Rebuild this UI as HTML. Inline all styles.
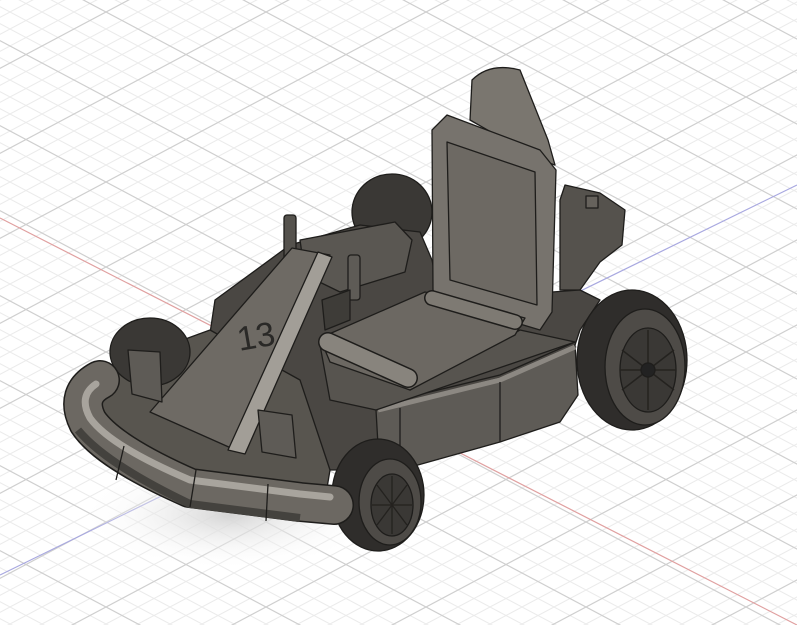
<!DOCTYPE html>
<html><head><meta charset="utf-8"><style>
html,body{margin:0;padding:0;background:#fff;}
svg{display:block}
</style></head><body>
<svg width="797" height="625" viewBox="0 0 797 625" xmlns="http://www.w3.org/2000/svg">
<defs>
<pattern id="mn" x="106" y="12" width="32" height="17" patternUnits="userSpaceOnUse">
<path d="M0 0L32 17M0 17L32 0" stroke="#ebebeb" stroke-width="1" fill="none"/>
</pattern>
<pattern id="mj" x="106" y="12" width="160" height="85" patternUnits="userSpaceOnUse">
<path d="M0 0L160 85M0 85L160 0" stroke="#cfcfcf" stroke-width="1.2" fill="none"/>
</pattern>
<radialGradient id="sh" cx="0.5" cy="0.5" r="0.5">
<stop offset="0" stop-color="#d4d4d4"/><stop offset="1" stop-color="#fff" stop-opacity="0"/>
</radialGradient>
</defs>
<rect width="797" height="625" fill="#fff"/>
<rect width="797" height="625" fill="url(#mn)"/>
<rect width="797" height="625" fill="url(#mj)"/>
<line x1="0" y1="218" x2="797" y2="625" stroke="#e0a0a0" stroke-width="1.2"/>
<line x1="797" y1="185" x2="0" y2="575" stroke="#a8a8e0" stroke-width="1.2"/>
<ellipse cx="230" cy="515" rx="150" ry="55" fill="url(#sh)"/>

<g stroke="#1e1d1b" stroke-width="1.3" stroke-linejoin="round">
<ellipse cx="392" cy="212" rx="40" ry="38" fill="#3a3835"/>
<path d="M565 185L600 193L625 210L622 245L600 262L580 290L560 290L560 200Z" fill="#55524d"/>
<rect x="586" y="196" width="12" height="12" fill="#66625c"/>
<path d="M215 300L290 245L360 225L420 232L432 260L440 300L580 290L600 300L580 330L575 345L560 420L400 470L330 470L300 430L240 430L200 400Z" fill="#4a4743"/>
<path d="M95 372L210 330L300 380L330 470L325 500L190 480L100 440Z" fill="#58554f"/>
<ellipse cx="632" cy="360" rx="55" ry="70" fill="#2f2d2b"/>
<ellipse cx="645" cy="367" rx="40" ry="58" fill="#4e4b47"/>
<ellipse cx="648" cy="370" rx="28" ry="42" fill="#3a3835"/>
<g stroke="#24221f" stroke-width="1.5">
<line x1="648" y1="330" x2="648" y2="410"/><line x1="622" y1="350" x2="674" y2="390"/><line x1="622" y1="390" x2="674" y2="350"/><line x1="620" y1="370" x2="676" y2="370"/>
</g>
<circle cx="648" cy="370" r="7" fill="#222"/>
<path d="M376 410L500 378L575 345L578 395L560 422L500 442L400 470L378 445Z" fill="#5e5b56"/>
<path d="M378 410L500 380L575 347" fill="none" stroke="#8c8882" stroke-width="5"/>
<path d="M376 405L500 375L575 342" fill="none"/>
<line x1="500" y1="382" x2="500" y2="442"/>
<line x1="400" y1="408" x2="400" y2="470"/>
<path d="M320 345L410 390L520 330L575 342L376 410L330 400Z" fill="#57544f"/>
<path d="M470 120L472 80Q490 62 520 70L548 140L555 165L540 160Z" fill="#7a766f"/>
<path d="M432 130L447 115L540 150L556 170L552 312L540 330L440 300L433 290Z" fill="#77736d"/>
<path d="M447 142L535 172L537 305L450 280Z" fill="#6d6963"/>
<path d="M320 338L425 292L525 318L515 335L410 390L330 362Z" fill="#6c6862"/>
<path d="M328 342L408 378" stroke-width="20" stroke="#1e1d1b" stroke-linecap="round"/>
<path d="M328 342L408 378" stroke-width="17" stroke="#88847d" stroke-linecap="round"/>
<path d="M432 298L515 322" stroke-width="16" stroke="#1e1d1b" stroke-linecap="round"/>
<path d="M432 298L515 322" stroke-width="13" stroke="#7e7a73" stroke-linecap="round"/>
<path d="M300 240L395 222L412 240L405 272L340 292L305 275Z" fill="#5a5752"/>
<rect x="284" y="215" width="12" height="45" rx="3" fill="#55524d"/>
<rect x="348" y="255" width="12" height="45" rx="3" fill="#5e5b56"/>
<path d="M322 300L350 290L350 320L325 330Z" fill="#3e3c38"/>
<ellipse cx="150" cy="352" rx="40" ry="34" fill="#3a3835"/>
<path d="M292 248L330 255L240 452L150 412Z" fill="#6e6a64"/>
<path d="M318 252L332 257L245 454L228 450Z" fill="#a29e97"/>
<text x="236" y="348" font-family="Liberation Sans,sans-serif" font-size="34" fill="#2a2927" stroke="none" transform="rotate(-10 255 330)">13</text>
<ellipse cx="378" cy="495" rx="46" ry="56" fill="#2f2d2b"/>
<ellipse cx="390" cy="502" rx="31" ry="43" fill="#4e4b47"/>
<ellipse cx="392" cy="505" rx="21" ry="31" fill="#3a3835"/>
<g stroke="#24221f" stroke-width="1.3">
<line x1="392" y1="476" x2="392" y2="534"/><line x1="372" y1="505" x2="412" y2="505"/><line x1="377" y1="485" x2="407" y2="525"/><line x1="377" y1="525" x2="407" y2="485"/>
</g>
<path d="M128 350L160 352L162 402L132 394Z" fill="#5e5b56"/>
<path d="M258 410L292 415L296 458L262 452Z" fill="#5e5b56"/>
<!-- bumper -->
<path d="M100 380Q74 394 88 422Q108 452 190 488L300 502Q322 504 334 505" fill="none" stroke="#1e1d1b" stroke-width="40" stroke-linecap="round"/>
<path d="M100 380Q74 394 88 422Q108 452 190 488L300 502Q322 504 334 505" fill="none" stroke="#6c6862" stroke-width="37" stroke-linecap="round"/>
<path d="M96 384Q78 396 90 418Q110 446 190 480L300 494Q320 496 330 497" fill="none" stroke="#a8a49d" stroke-width="7" stroke-linecap="round"/>
<path d="M78 430Q106 464 190 504L300 518" fill="none" stroke="#44423e" stroke-width="8"/>
<line x1="124" y1="446" x2="116" y2="480"/>
<line x1="196" y1="470" x2="190" y2="507"/>
<line x1="268" y1="484" x2="266" y2="521"/>
</g>
</svg>
</body></html>
